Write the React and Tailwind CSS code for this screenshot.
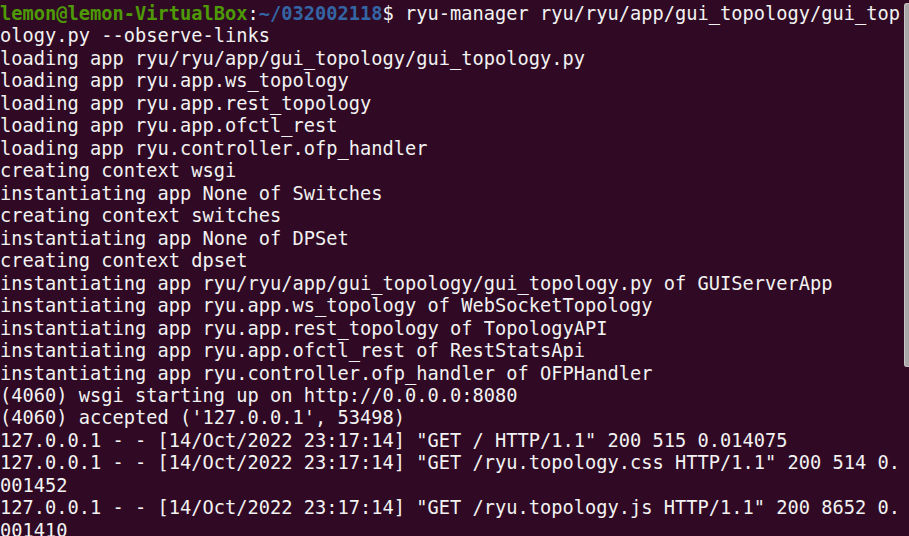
const lines = [
  'ology.py --observe-links',
  'loading app ryu/ryu/app/gui_topology/gui_topology.py',
  'loading app ryu.app.ws_topology',
  'loading app ryu.app.rest_topology',
  'loading app ryu.app.ofctl_rest',
  'loading app ryu.controller.ofp_handler',
  'creating context wsgi',
  'instantiating app None of Switches',
  'creating context switches',
  'instantiating app None of DPSet',
  'creating context dpset',
  'instantiating app ryu/ryu/app/gui_topology/gui_topology.py of GUIServerApp',
  'instantiating app ryu.app.ws_topology of WebSocketTopology',
  'instantiating app ryu.app.rest_topology of TopologyAPI',
  'instantiating app ryu.app.ofctl_rest of RestStatsApi',
  'instantiating app ryu.controller.ofp_handler of OFPHandler',
  '(4060) wsgi starting up on http://0.0.0.0:8080',
  "(4060) accepted ('127.0.0.1', 53498)",
  '127.0.0.1 - - [14/Oct/2022 23:17:14] "GET / HTTP/1.1" 200 515 0.014075',
  '127.0.0.1 - - [14/Oct/2022 23:17:14] "GET /ryu.topology.css HTTP/1.1" 200 514 0.',
  '001452',
  '127.0.0.1 - - [14/Oct/2022 23:17:14] "GET /ryu.topology.js HTTP/1.1" 200 8652 0.',
  '001410',
];

export default function App() {
  return (
    <div className="relative h-[536px] w-[909px] overflow-hidden bg-[#300a24]">
      <div className="pt-[3px] font-['DejaVu_Sans_Mono',monospace] text-[18.69px] leading-[22.47px] text-[#f2f2f2] whitespace-pre">
        <div>
          <span className="font-bold text-[#4e9a06]">lemon@lemon-VirtualBox</span>
          <span>:</span>
          <span className="font-bold text-[#3465a4]">~/032002118</span>
          <span>$ ryu-manager ryu/ryu/app/gui_topology/gui_top</span>
        </div>
        {lines.map((l, i) => (
          <div key={i}>{l}</div>
        ))}
      </div>
      {/* scrollbar */}
      <div className="absolute right-0 top-[3px] h-[364px] w-[5px] rounded-l-[3px] border border-r-0 border-[#c8c8c8] bg-[#a9a9a9]" />
    </div>
  );
}
